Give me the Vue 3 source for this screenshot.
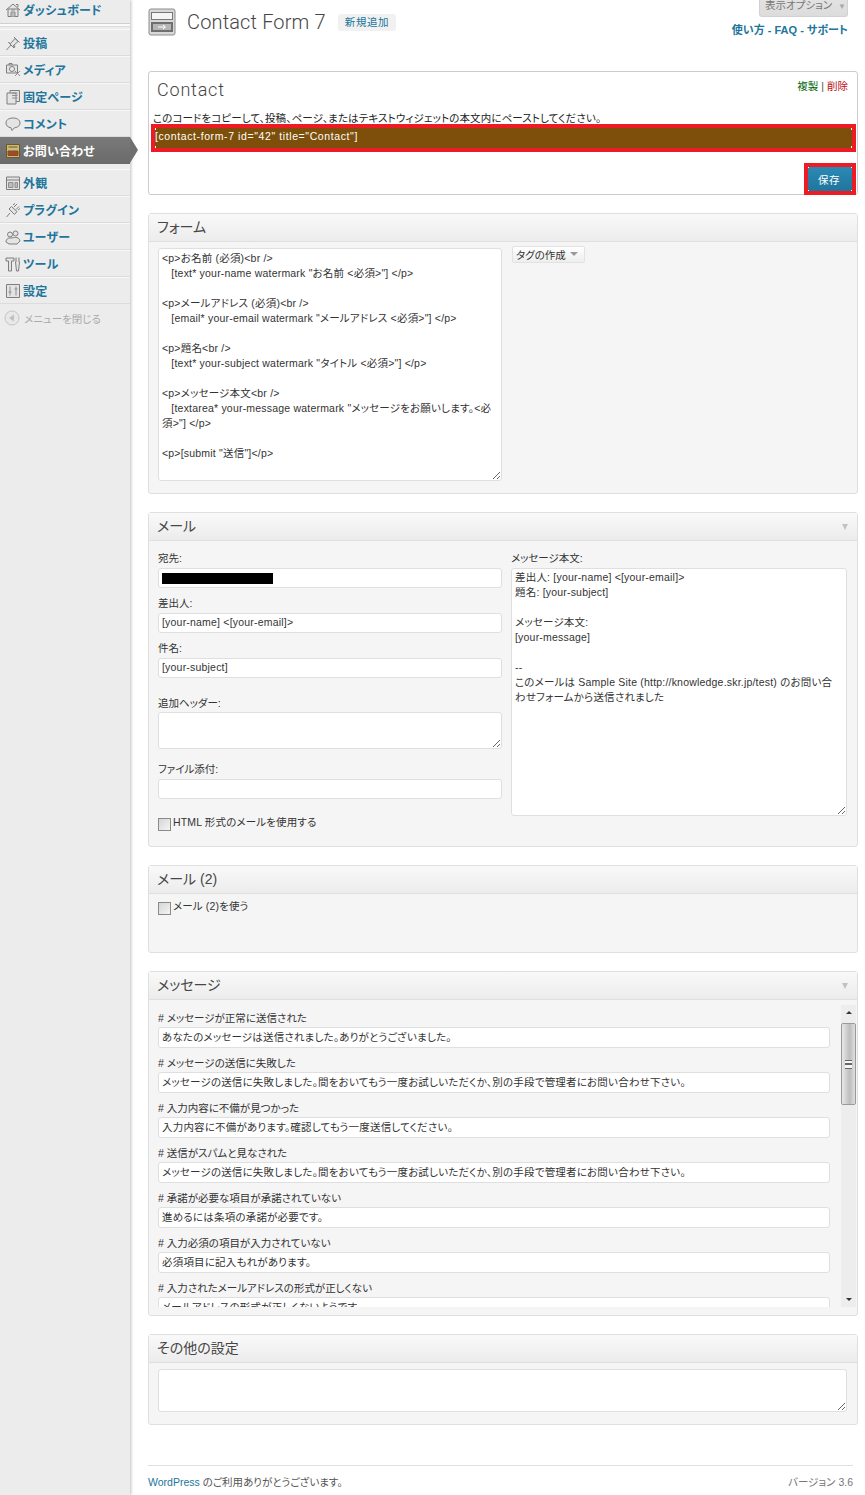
<template>
  <div class="page">
    <!-- sidebar -->
    <aside class="sidebar">
      <template v-for="item in menu" :key="item.label">
        <div :class="['menu-item', { current: item.current, first: item.first, gap: item.gap }]">
          <svg class="menu-icon" viewBox="0 0 16 16" width="16" height="16">
            <path :d="item.icon" />
            <path v-if="item.accent" class="accent" :d="item.accent" />
          </svg>
          <span>{{ item.label }}</span>
        </div>
      </template>
      <div class="collapse">
        <svg viewBox="0 0 16 16" width="16" height="16">
          <circle cx="8" cy="8" r="7" fill="#e8e8e8" stroke="#c4c4c4" />
          <path d="M5 8 L10 4.500 V11.500 Z" fill="#c0c0c0" />
        </svg>
        <span>メニューを閉じる</span>
      </div>
    </aside>

    <main class="content">
      <!-- page heading -->
      <header class="heading">
        <svg class="page-icon" viewBox="0 0 28 28" width="28" height="28">
          <rect x="1" y="1" width="26" height="26" rx="2" fill="#d8d8d8" stroke="#8d8d8d" />
          <rect x="3.500" y="4.500" width="21" height="7" fill="#f5f5f5" stroke="#777" />
          <rect x="3" y="14" width="22" height="10" fill="#6f6f6f" />
          <rect x="5" y="16" width="18" height="6" fill="#b5b5b5" />
          <path d="M10 19 H17 M15 17 L17.500 19 L15 21" fill="none" stroke="#fff" />
        </svg>
        <h1>Contact Form 7</h1>
        <a class="add-new">新規追加</a>
        <div class="heading-right">
          <div class="screen-options">表示オプション <i>▼</i></div>
          <div class="help-links">使い方 - FAQ - サポート</div>
        </div>
      </header>

      <!-- form title -->
      <section class="title-box">
        <div class="title-row">
          <h2>Contact</h2>
          <div class="actions"><span class="copy">複製</span><span class="sep">|</span><span class="delete">削除</span></div>
        </div>
        <p class="hint">このコードをコピーして、投稿、ページ、またはテキストウィジェットの本文内にペーストしてください。</p>
        <div class="code-mark">
          <div class="code">[contact-form-7 id="42" title="Contact"]</div>
        </div>
        <div class="save-row">
          <div class="save-mark"><button class="save">保存</button></div>
        </div>
      </section>

      <!-- form -->
      <section class="postbox">
        <h3>フォーム</h3>
        <div class="form-body">
          <textarea class="form-text" readonly :value="formText"></textarea>
          <button class="tag-btn">タグの作成 <i></i></button>
        </div>
      </section>

      <!-- mail -->
      <section class="postbox">
        <h3>メール<b class="toggle"></b></h3>
        <div class="mail-body">
          <div class="mail-col">
            <label>宛先:</label>
            <div class="redacted-wrap"><input class="field" readonly /><span class="redacted"></span></div>
            <label>差出人:</label>
            <input class="field" readonly value="[your-name] <[your-email]>" />
            <label>件名:</label>
            <input class="field" readonly value="[your-subject]" />
            <label class="header-label">追加ヘッダー:</label>
            <textarea class="headers" readonly></textarea>
            <label>ファイル添付:</label>
            <input class="field" readonly />
            <div class="check-row html-check"><input type="checkbox" /><span>HTML 形式のメールを使用する</span></div>
          </div>
          <div class="mail-col right">
            <label>メッセージ本文:</label>
            <textarea class="mail-text" readonly :value="mailText"></textarea>
          </div>
        </div>
      </section>

      <!-- mail 2 -->
      <section class="postbox">
        <h3>メール (2)</h3>
        <div class="mail2-body">
          <div class="check-row"><input type="checkbox" /><span>メール (2)を使う</span></div>
        </div>
      </section>

      <!-- messages -->
      <section class="postbox">
        <h3>メッセージ<b class="toggle"></b></h3>
        <div class="messages-body">
          <div class="messages">
            <div v-for="msg in messages" :key="msg.label" class="message">
              <label># {{ msg.label }}</label>
              <input class="field" readonly :value="msg.text" />
            </div>
          </div>
          <div class="scrollbar">
            <span class="arrow up"></span>
            <div class="thumb"><i></i></div>
            <span class="arrow down"></span>
          </div>
        </div>
      </section>

      <!-- other -->
      <section class="postbox">
        <h3>その他の設定</h3>
        <div class="other-body">
          <textarea readonly></textarea>
        </div>
      </section>

      <footer class="footer">
        <span><a>WordPress</a> のご利用ありがとうございます。</span>
        <span class="version">バージョン 3.6</span>
      </footer>
    </main>
  </div>
</template>

<script setup>
const menu = [
  { label: 'ダッシュボード', first: true, icon: 'M1 8 L8 2 L15 8 M3 7 V14.500 H13 V7 Z M11 2.500 H13 V5', accent: 'M6 14.500 V10 H10 V14.500 M6 8 H10' },
  { label: '投稿', icon: 'M1.500 15 L6 10 M3.500 7.500 L9 13 L10 11 L8 11 L13 6.500 L10 3.500 L5.500 8.500 Z M9 2 L14.500 7.500' },
  { label: 'メディア', icon: 'M1.500 3 H12.500 V11 H1.500 Z M4 3 V1.500 H7 V3 M7 4.500 A2.500 2.500 0 1 0 7 9.500 A2.500 2.500 0 1 0 7 4.500', accent: 'M10 9 L15 14 M15 9 L10 14' },
  { label: '固定ページ', icon: 'M2 4 H11 V15 H2 Z M5 1.500 H14.500 V12.500 H11 M5 1.500 V4', accent: 'M7 4 H12.500 M7 6.500 H12.500 M7 9 H12.500' },
  { label: 'コメント', icon: 'M8 2 C3 2 1 4.500 1 7 C1 9.500 3 11.500 6 11.800 L7 14.500 L9.500 11.800 C13 11.500 15 9.500 15 7 C15 4.500 13 2 8 2 Z' },
  { label: 'お問い合わせ', current: true, icon: 'M1.500 1.500 H14.500 V14.500 H1.500 Z M3.500 4 H12.500', accent: 'M3 8 H13 V12.500 H3 Z' },
  { label: '外観', gap: true, icon: 'M1.500 2 H14.500 V14.500 H1.500 Z M1.500 5 H14.500', accent: 'M3.500 7.500 H8 V12.500 H3.500 Z M10 7.500 H12.500 V12.500 H10 Z' },
  { label: 'プラグイン', icon: 'M1.500 15 L5 11 M4 7 L9.500 12.500 L12 9.500 L6.500 4.500 Z M8 3 L10 1.500 M13 8 L15 6.500 M9 5 L12 2 M11 7.500 L14 4.500' },
  { label: 'ユーザー', icon: 'M5 3 A2.500 2.500 0 1 0 5 8 A2.500 2.500 0 1 0 5 3 M10.500 2 A2.500 2.500 0 1 0 10.500 7 A2.500 2.500 0 1 0 10.500 2 M1 13 C1 9.500 4 8.500 7 9 C10 8 14.500 8 15 12 L12 15 H4 Z' },
  { label: 'ツール', icon: 'M1 2 H9 V5 H6.500 V15 H3.500 V5 H1 Z M11 1.500 V6 H10.500 L11.500 15 H13.500 L14.500 6 H14 V1.500' },
  { label: '設定', icon: 'M1.500 1.500 H14.500 V14.500 H1.500 Z', accent: 'M5 3.500 V12.500 M11 3.500 V12.500 M3.500 9 H6.500 M9.500 6 H12.500' },
]

const formText = `<p>お名前 (必須)<br />
   [text* your-name watermark "お名前 <必須>"] </p>

<p>メールアドレス (必須)<br />
   [email* your-email watermark "メールアドレス <必須>"] </p>

<p>題名<br />
   [text* your-subject watermark "タイトル <必須>"] </p>

<p>メッセージ本文<br />
   [textarea* your-message watermark "メッセージをお願いします。<必
須>"] </p>

<p>[submit "送信"]</p>`

const mailText = `差出人: [your-name] <[your-email]>
題名: [your-subject]

メッセージ本文:
[your-message]

--
このメールは Sample Site (http://knowledge.skr.jp/test) のお問い合
わせフォームから送信されました`

const failed = 'メッセージの送信に失敗しました。間をおいてもう一度お試しいただくか、別の手段で管理者にお問い合わせ下さい。'

const messages = [
  { label: 'メッセージが正常に送信された', text: 'あなたのメッセージは送信されました。ありがとうございました。' },
  { label: 'メッセージの送信に失敗した', text: failed },
  { label: '入力内容に不備が見つかった', text: '入力内容に不備があります。確認してもう一度送信してください。' },
  { label: '送信がスパムと見なされた', text: failed },
  { label: '承諾が必要な項目が承諾されていない', text: '進めるには条項の承諾が必要です。' },
  { label: '入力必須の項目が入力されていない', text: '必須項目に記入もれがあります。' },
  { label: '入力されたメールアドレスの形式が正しくない', text: 'メールアドレスの形式が正しくないようです。' },
]
</script>

<style>
body {
  margin: 0;
  background: #fff;
}
</style>

<style scoped>
.page {
  display: flex;
  height: 1495px;
  overflow: hidden;
  font-family: "Liberation Sans", "Noto Sans CJK JP", sans-serif;
  font-size: 11px;
  font-feature-settings: "palt";
  color: #333;
}

/* sidebar */
.sidebar {
  width: 130px;
  flex: none;
  background: #ececec;
  box-shadow: 1px 0 3px rgba(0, 0, 0, 0.25);
}

.menu-item {
  display: flex;
  align-items: center;
  gap: 2px;
  height: 27px;
  box-sizing: border-box;
  padding-left: 5px;
  border-top: 1px solid #f8f8f8;
  border-bottom: 1px solid #dcdcdc;
  font-size: 12px;
  font-weight: 700;
  letter-spacing: 0.200px;
  color: #21759b;
  position: relative;
}

.menu-item.first {
  height: 24px;
  border-top: 0;
  padding-bottom: 4px;
  margin-bottom: 5px;
  border-bottom: 1px solid #d0d0d0;
  box-shadow: 0 2px 0 #fafafa, 0 3px 0 #dcdcdc;
}

.menu-item.gap {
  margin-top: 5px;
}

.menu-item.current {
  border: 0;
  color: #fff;
  background: linear-gradient(#7a7a7a, #6a6a6a);
}

.menu-item.current::after {
  content: "";
  position: absolute;
  right: -8px;
  top: 0;
  border-left: 8px solid #707070;
  border-top: 13.500px solid transparent;
  border-bottom: 13.500px solid transparent;
}

.menu-item.current path {
  fill: #c9bb80;
  stroke: #6e5a20;
}

.menu-item.current path.accent {
  fill: #b2402c;
  stroke: #6e5a20;
}

.menu-icon {
  flex: none;
}

.menu-icon path {
  fill: #e4e4e4;
  stroke: #7e7e7e;
  stroke-width: 1;
}

.menu-icon path.accent {
  fill: #bdbdbd;
  stroke: #8e8e8e;
}

.collapse {
  display: flex;
  align-items: center;
  gap: 4px;
  height: 28px;
  padding-left: 4px;
  font-size: 10.500px;
  color: #aaa;
}

/* main column */
.content {
  flex: 1;
  min-width: 0;
  padding: 0 7px 0 18px;
}

.heading {
  display: flex;
  height: 71px;
  box-sizing: border-box;
  padding-top: 8px;
}

.page-icon {
  flex: none;
}

h1 {
  margin: 2px 0 0 11px;
  font-family: Roboto, "Liberation Sans", sans-serif;
  font-size: 20px;
  line-height: 25px;
  height: 25px;
  font-weight: 300;
  letter-spacing: 0.150px;
  color: #464646;
}

.add-new {
  align-self: flex-start;
  margin: 6px 0 0 12px;
  padding: 0 7px;
  height: 17px;
  line-height: 17px;
  border-radius: 3px;
  background: #f1f1f1;
  color: #21759b;
  font-size: 10.500px;
  letter-spacing: 0.600px;
}

.heading-right {
  margin: -8px 10px 0 auto;
  display: flex;
  flex-direction: column;
  align-items: flex-end;
}

.screen-options {
  width: 89px;
  height: 17px;
  box-sizing: border-box;
  padding-left: 5px;
  line-height: 11px;
  border-radius: 0 0 3px 3px;
  background: linear-gradient(#e2e2e2, #dcdcdc);
  border: 1px solid #d2d2d2;
  border-top: 0;
  color: #777;
  font-size: 10.500px;
}

.screen-options i {
  font-style: normal;
  font-size: 8px;
  margin-left: 3px;
  color: #aaa;
}

.help-links {
  margin-top: 6px;
  font-weight: 700;
  font-size: 11px;
  line-height: 14px;
  color: #21759b;
}

/* title box */
.title-box {
  box-sizing: border-box;
  height: 124px;
  border: 1px solid #ccc;
  border-radius: 3px;
  background: #fff;
  margin-bottom: 18px;
}

.title-row {
  display: flex;
  justify-content: space-between;
  height: 39px;
  padding: 7px 9px 0 8px;
  box-sizing: border-box;
}

h2 {
  margin: 0;
  font-family: Roboto, "Liberation Sans", sans-serif;
  font-size: 18px;
  line-height: 22px;
  font-weight: 300;
  letter-spacing: 0.800px;
  color: #464646;
}

.actions {
  font-size: 10.500px;
  line-height: 12px;
  margin-top: 1px;
}

.copy {
  color: #006505;
}

.sep {
  margin: 0 3px;
  color: #555;
}

.delete {
  color: #bc0b0b;
}

.hint {
  margin: 0 0 0 4px;
  height: 13px;
  line-height: 15px;
  color: #222;
  font-size: 10.500px;
  letter-spacing: 0.120px;
  white-space: nowrap;
}

.code-mark {
  position: relative;
  margin: 0 1px 0 2px;
  padding: 4px;
  height: 28px;
  box-sizing: border-box;
  background: #ed1c24;
}

.code {
  height: 20px;
  line-height: 16px;
  background:
    linear-gradient(#fff, #fff) 0 0 / 1px 2px no-repeat,
    linear-gradient(#fff, #fff) 100% 0 / 1px 2px no-repeat,
    linear-gradient(#fff, #fff) 0 100% / 1px 2px no-repeat,
    linear-gradient(#fff, #fff) 100% 100% / 1px 2px no-repeat,
    #7d4f0a;
  color: #fff;
  font-size: 10.500px;
  letter-spacing: 0.600px;
}

.save-row {
  display: flex;
  justify-content: flex-end;
  margin: 11px 1px 0 0;
}

.save-mark {
  background: #ed1c24;
  padding: 4px;
  height: 32px;
  width: 52px;
  box-sizing: border-box;
}

.save {
  display: block;
  width: 44px;
  height: 24px;
  padding: 0 2px 0 0;
  border: 0;
  background:
    linear-gradient(#fff, #fff) 0 0 / 1px 1px no-repeat,
    linear-gradient(#fff, #fff) 100% 0 / 1px 1px no-repeat,
    linear-gradient(#fff, #fff) 0 100% / 1px 1px no-repeat,
    linear-gradient(#fff, #fff) 100% 100% / 1px 1px no-repeat,
    linear-gradient(#2a8ab5, #21759b);
  color: #fff;
  font: inherit;
  font-size: 10.500px;
  letter-spacing: 0.500px;
}

/* postboxes */
.postbox {
  border: 1px solid #dfdfdf;
  border-radius: 3px;
  background: #f5f5f5;
  margin-bottom: 18px;
}

h3 {
  display: flex;
  justify-content: space-between;
  align-items: center;
  margin: 0;
  height: 28px;
  padding: 0 9px 4px 8px;
  box-sizing: border-box;
  border-bottom: 1px solid #dfdfdf;
  background: linear-gradient(#f9f9f9, #ececec);
  font-size: 14px;
  font-weight: 400;
  color: #464646;
}

.toggle {
  width: 0;
  height: 0;
  margin-top: 4px;
  border-left: 3px solid transparent;
  border-right: 3px solid transparent;
  border-top: 6px solid #c2c2c2;
}

textarea,
.field {
  display: block;
  box-sizing: border-box;
  width: 100%;
  margin: 0;
  border: 1px solid #dfdfdf;
  border-radius: 3px;
  background: #fff;
  font-family: inherit;
  font-feature-settings: "palt";
  font-size: 10.500px;
  letter-spacing: 0.200px;
  color: #333;
  outline: none;
}

.field {
  height: 20px;
  padding: 0 3px 2px;
}

textarea {
  line-height: 15px;
  padding: 2px 3px;
  overflow: hidden;
}

label {
  display: block;
  font-size: 10.500px;
  line-height: 13px;
  color: #333;
}

input[type="checkbox"] {
  appearance: none;
  flex: none;
  width: 13px;
  height: 13px;
  margin: 0;
  border: 1px solid #8a8a8a;
  background: linear-gradient(135deg, #d6d6d6, #f4f4f4);
}

.check-row {
  display: flex;
  align-items: flex-start;
  gap: 2px;
  font-size: 10.500px;
  letter-spacing: 0.150px;
}

.check-row span {
  line-height: 13px;
  margin-top: -2px;
}

/* form */
.form-body {
  display: flex;
  align-items: flex-start;
  gap: 10px;
  padding: 6px 9px 12px;
}

.form-text {
  width: 344px;
  height: 233px;
  flex: none;
}

.tag-btn {
  display: flex;
  align-items: center;
  gap: 4px;
  height: 17px;
  margin-top: -2px;
  width: 73px;
  padding: 0 3px 1px;
  box-sizing: border-box;
  border: 1px solid #e2e2e2;
  border-radius: 2px;
  background: linear-gradient(#fff, #eee);
  font: inherit;
  font-size: 10.500px;
  color: #333;
}

.tag-btn i {
  border-left: 4px solid transparent;
  border-right: 4px solid transparent;
  border-top: 4px solid #999;
}

/* mail */
.mail-body {
  display: flex;
  gap: 9px;
  padding: 11px 10px 0 9px;
  height: 305px;
  box-sizing: border-box;
}

.mail-col {
  width: 344px;
  flex: none;
}

.mail-col.right {
  width: 336px;
}

.mail-col label {
  height: 16px;
}

.mail-col .field {
  margin-bottom: 9px;
}

.redacted-wrap {
  position: relative;
}

.redacted {
  position: absolute;
  left: 4px;
  top: 5px;
  width: 111px;
  height: 11px;
  background: #000;
}

.mail-col .header-label {
  height: 15px;
  margin-top: 19px;
}

.headers {
  height: 37px;
  margin-bottom: 14px;
}

.html-check {
  margin-top: 19px;
}

.mail-text {
  height: 248px;
  padding-top: 1px;
}

.mail2-body {
  height: 58px;
  box-sizing: border-box;
  padding: 8px 9px 0;
}

/* messages */
.messages-body {
  display: flex;
  height: 315px;
  box-sizing: border-box;
  padding: 5px 1px 8px 9px;
}

.messages {
  flex: 1;
  min-width: 0;
  overflow: hidden;
  padding-right: 11px;
}

.message {
  height: 45px;
  padding-top: 7px;
  box-sizing: border-box;
}

.message label {
  height: 15px;
}

.message .field {
  height: 21px;
  padding-bottom: 3px;
}

.scrollbar {
  width: 15px;
  flex: none;
  display: flex;
  flex-direction: column;
  align-items: center;
  background: #ededed;
}

.arrow {
  flex: none;
  width: 0;
  height: 0;
  margin: 6px 0;
  border-left: 3px solid transparent;
  border-right: 3px solid transparent;
}

.arrow.up {
  border-bottom: 3px solid #333;
}

.arrow.down {
  margin-top: auto;
  border-top: 3px solid #333;
}

.thumb {
  width: 15px;
  height: 82px;
  flex: none;
  box-sizing: border-box;
  margin-top: 3px;
  display: flex;
  align-items: center;
  justify-content: center;
  border: 1px solid #999;
  border-radius: 2px;
  background: linear-gradient(90deg, #e8e8e8, #bdbdbd 60%, #e0e0e0);
}

.thumb i {
  width: 7px;
  height: 7px;
  border-top: 1px solid #666;
  border-bottom: 1px solid #666;
  background: linear-gradient(#f5f5f5 30%, #666 30%, #666 60%, #f5f5f5 60%);
}

/* other */
.other-body {
  height: 61px;
  box-sizing: border-box;
  padding: 6px 10px 0 9px;
}

.other-body textarea {
  height: 43px;
}

.footer {
  display: flex;
  justify-content: space-between;
  margin: 40px 5px 0 0;
  padding-top: 9px;
  border-top: 1px solid #dfdfdf;
  line-height: 14px;
  font-size: 10.500px;
  color: #555;
}

.footer a {
  color: #21759b;
}

.version {
  color: #777;
}
</style>
